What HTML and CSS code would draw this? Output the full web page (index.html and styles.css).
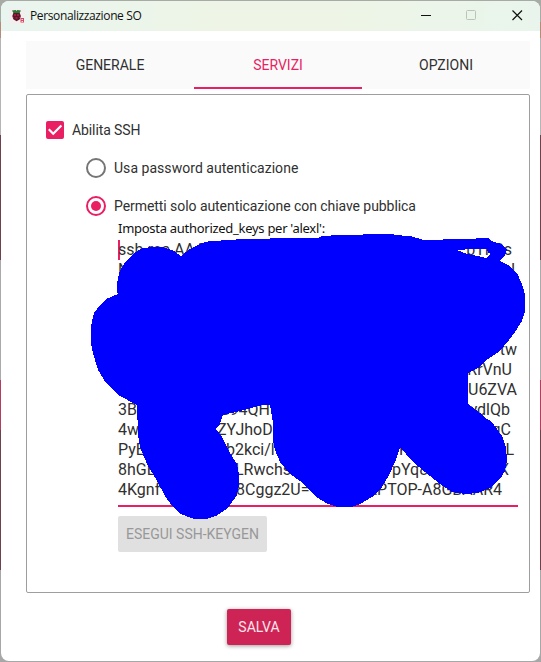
FILE: index.html
```html
<!DOCTYPE html>
<html lang="it">
<head>
<meta charset="utf-8">
<title>Personalizzazione SO</title>
<link rel="stylesheet" href="styles.css">
</head>
<body>
<div class="window">
  <header class="titlebar">
    <svg class="app-icon" width="16" height="16" viewBox="0 0 16 16">
      <rect width="16" height="16" rx="2" fill="#f3efee"/>
      <path d="M3 2.5 6.8 2 7.5 3 8.3 2 12 2.5 10.5 5.2H4.5Z" fill="#267b35"/>
      <path d="M4.4 5h6.3l1.2 3-1 3.3-3.3 2-3.3-2-1-3.3Z" fill="#5b172a"/>
      <path d="M5 6h2v2H5zm3 0h2v2H8zM6.5 9h2v2h-2zM4 9h1v1H4zM10 9h1v1h-1z" fill="#a51c43"/>
      <path d="M11.500 10h3.500v4.500h-3.500z" fill="#d64a68"/><path d="M12.500 11h1.500v1h-1.500zm0 2h1.500v1h-1.500z" fill="#f5dde2"/>
    </svg>
    <span class="title">Personalizzazione SO</span>
    <svg class="controls" width="104" height="12" viewBox="0 0 104 12">
      <path d="M0 6.5h10" stroke="#111" fill="none"/>
      <rect x="45.500" y="1.500" width="9" height="9" rx="1" stroke="#bcc4b9" fill="none"/>
      <path d="M91.500 1.500l9.500 9.500M101 1.500l-9.500 9.500" stroke="#111" stroke-width="1.200" fill="none"/>
    </svg>
  </header>
  <nav class="tabs">
    <span class="tab">GENERALE</span>
    <span class="tab active">SERVIZI</span>
    <span class="tab">OPZIONI</span>
  </nav>
  <main class="panel">
    <label class="option">
      <svg width="18" height="18" viewBox="0 0 18 18"><rect width="18" height="18" rx="2" fill="#e91e63"/><path d="M2.800 8.300l4.400 4.400 8.200-8.200" fill="none" stroke="#fff" stroke-width="2.200"/></svg>
      <span class="enable">Abilita SSH</span>
    </label>
    <label class="option nested">
      <svg width="20" height="20" viewBox="0 0 20 20"><circle cx="10" cy="10" r="9" fill="none" stroke="#757575" stroke-width="2"/></svg>
      <span class="password">Usa password autenticazione</span>
    </label>
    <label class="option nested">
      <svg width="20" height="20" viewBox="0 0 20 20"><circle cx="10" cy="10" r="9" fill="none" stroke="#e91e63" stroke-width="2"/><circle cx="10" cy="10" r="5" fill="#e91e63"/></svg>
      <span class="public">Permetti solo autenticazione con chiave pubblica</span>
    </label>
    <section class="keys">
      <div class="caption">Imposta authorized_keys per 'alexl':</div>
      <div class="keytext">
        <div class="line caret"><span>ssh-rsa AAAA</span><span class="end" style="margin-right:6px">bTK2s</span></div>
        <div class="line"><span>N</span><span class="end" style="margin-right:3px">J</span></div>
        <div class="line"></div>
        <div class="line"></div>
        <div class="line"></div>
        <div class="line"><span class="end" style="margin-right:1px">tw</span></div>
        <div class="line"><span class="end" style="margin-right:6px">RrVnU</span></div>
        <div class="line"><span class="end" style="margin-right:1px">U6ZVA</span></div>
        <div class="line"><span style="width:102px">3B</span><span>S94QH</span><span class="end" style="margin-right:8px">ydlQb</span></div>
        <div class="line"><span style="width:99px">4w</span><span>ZYJhoD</span><span class="end" style="margin-right:7px">qC</span></div>
        <div class="line"><span style="width:108px">PyE</span><span style="width:173px">b2kci/l</span><span>K</span><span class="end" style="margin-right:4px">L</span></div>
        <div class="line"><span style="width:117px">8hGE</span><span style="width:157px">LRwchs</span><span>pYq8</span><span class="end" style="margin-right:9px">X</span></div>
        <div class="line"><span style="width:118px">4Kgnf</span><span>8Cggz2U=</span><span class="end" style="margin-right:16px">LAPTOP-A8GBAAR4</span></div>
      </div>
      <button class="keygen" disabled>ESEGUI SSH-KEYGEN</button>
    </section>
  </main>
  <footer><button class="save">SALVA</button></footer>
  <svg class="scribble" width="541" height="662" viewBox="0 0 541 662">
    <path fill="#00f" fill-rule="evenodd" shape-rendering="crispEdges" d="M117 293L117 284 119 273 124 264 134 253 143 248 152 247 163 247 174 251 181 256 190 249 202 243 210 241 232 240 240 239 300 238 318 238 322 236 340 235 362 235 363 234 393 234 394 235 410 236 424 240 442 240 444 239 475 239 476 238 488 238 491 241 502 244 507 250 505 255 500 261 510 266 518 275 523 287 525 295 525 311 522 321 515 332 509 340 500 351 488 359 478 368 468 373 468 404 480 413 484 417 492 422 502 436 506 447 507 460 505 471 500 479 490 488 478 493 465 494 452 492 440 484 425 472 412 461 400 447 396 460 389 475 382 487 372 497 360 504 352 507 337 507 326 503 315 496 303 483 290 474 280 462 275 450 273 440 273 423 270 405 263 405 240 411 223 415 220 424 216 429 222 437 230 453 237 464 239 474 239 485 237 495 228 508 216 516 206 519 194 519 181 514 172 506 165 496 157 481 147 464 140 447 138 435 137 405 120 396 106 383 98 370 93 353 91 343 91 326 94 313 100 305 106 299 118 294ZM457 250L472 249 487 249 488 253 491 254 486 258 478 256 467 254Z"/>
  </svg>
</div>
</body>
</html>
```
FILE: styles.css
```css
* { box-sizing: border-box; }
body {
  margin: 0;
  width: 541px;
  height: 662px;
  overflow: hidden;
  background: linear-gradient(#a8aaa6 0 22px, #b58b7a 22px 38px, #b5b5b5 38px 135px, #70404d 135px 260px, #aaa 260px 380px, #b43c60 380px 430px, #70404d 430px 570px, #a7a7a7 570px);
  font-family: Roboto, sans-serif;
  font-size: 14px;
  color: #303030;
}
.window {
  position: relative;
  height: 660px;
  margin: 1px;
  background: #fff;
  border-radius: 8px;
  overflow: hidden;
}
.titlebar {
  display: flex;
  align-items: center;
  height: 30px;
  padding: 0 15px 0 8px;
  background: linear-gradient(90deg, #e9f5ef, #eef5e6 42%, #eef5e6 60%, #e9f5ec);
}
.controls { margin-left: auto; margin-top: -2px; }
.title {
  margin-left: 5px;
  font: 12px "Open Sans", sans-serif;
  letter-spacing: -0.37px;
  color: #111;
  margin-top: -1px;
}
.tabs {
  display: grid;
  grid-template-columns: repeat(3, 1fr);
  width: 504px;
  height: 48px;
  margin: 10px 0 5px 25px;
  background: #fafafa;
}
.tab { line-height: 48px; text-align: center; }
.tab.active { color: #e91e63; box-shadow: inset 0 -2px #e91e63; }
.panel {
  width: 504px;
  height: 499px;
  margin-left: 25px;
  padding: 16px 0 0 19px;
  border: 1px solid #9e9e9e;
  border-radius: 2px;
}
.option { display: flex; align-items: center; gap: 8px; height: 38px; }
.nested { padding-left: 40px; }
.enable { letter-spacing: -0.1px; }
.password { letter-spacing: 0.04px; }
.public { letter-spacing: -0.06px; }
.keys { width: 400px; margin-left: 72px; }
.caption {
  height: 17px;
  margin-top: -5px;
  font: 13px/17px "Noto Sans", sans-serif;
  letter-spacing: -0.28px;
  color: #111;
  white-space: nowrap;
}
.keytext { padding: 3px 0 5px; border-bottom: 2px solid #e91e63; font-size: 16px; }
.line { display: flex; height: 20px; line-height: 20px; white-space: nowrap; }
.line span { flex: none; }
.line .end { margin-left: auto; }
.caret { box-shadow: inset 2px 0 #e91e63; }
button { border: 0; border-radius: 2px; height: 36px; font: 14px Roboto, sans-serif; }
.keygen { display: block; width: 149px; margin-top: 9px; padding: 0; background: #e0e0e0; color: #989898; }
footer { display: flex; justify-content: center; padding: 16px 23px 0 0; }
.save { width: 64px; background: #ce2455; color: #f9e5eb; box-shadow: 0 1px 4px #0006; }
.scribble { position: absolute; left: -1px; top: -1px; pointer-events: none; }
```
